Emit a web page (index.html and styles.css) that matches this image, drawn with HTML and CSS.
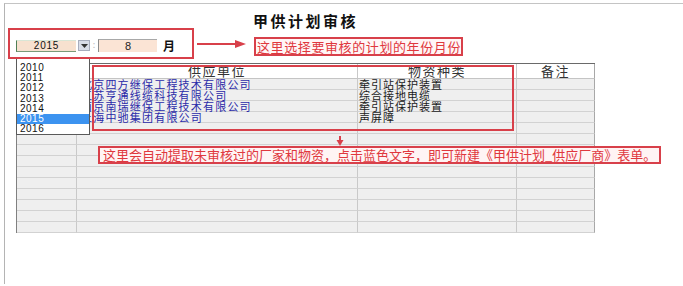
FILE: index.html
```html
<!DOCTYPE html>
<html lang="zh">
<head>
<meta charset="utf-8">
<title>甲供计划审核</title>
<link rel="stylesheet" href="styles.css">
</head>
<body>
<div class="page">
  <div class="frame">
    <div class="title">甲供计划审核</div>
    <div class="controls">
      <div class="combo">2015</div>
      <div class="combo-btn"><svg width="7" height="4" viewBox="0 0 7 4"><path d="M0 0H7L3.5 4Z" fill="#333"/></svg></div>
      <div class="sep">:</div>
      <div class="month">8</div>
      <div class="month-label">月</div>
    </div>
    <div class="grid">
      <div class="cell head"></div>
      <div class="cell head">供应单位</div>
      <div class="cell head">物资种类</div>
      <div class="cell head">备注</div>

      <div class="cell"></div><div class="cell link"><a href="#">北京四方继保工程技术有限公司</a></div><div class="cell txt">牵引站保护装置</div><div class="cell"></div>
      <div class="cell"></div><div class="cell link"><a href="#">江苏亨通线缆科技有限公司</a></div><div class="cell txt">综合接地电缆</div><div class="cell"></div>
      <div class="cell"></div><div class="cell link"><a href="#">南京南瑞继保工程技术有限公司</a></div><div class="cell txt">牵引站保护装置</div><div class="cell"></div>
      <div class="cell"></div><div class="cell link"><a href="#">上海中驰集团有限公司</a></div><div class="cell txt">声屏障</div><div class="cell"></div>
      <div class="cell"></div><div class="cell"></div><div class="cell"></div><div class="cell"></div>
      <div class="cell"></div><div class="cell"></div><div class="cell"></div><div class="cell"></div>
      <div class="cell"></div><div class="cell"></div><div class="cell"></div><div class="cell"></div>
      <div class="cell"></div><div class="cell"></div><div class="cell"></div><div class="cell"></div>
      <div class="cell"></div><div class="cell"></div><div class="cell"></div><div class="cell"></div>
      <div class="cell"></div><div class="cell"></div><div class="cell"></div><div class="cell"></div>
      <div class="cell"></div><div class="cell"></div><div class="cell"></div><div class="cell"></div>
      <div class="cell"></div><div class="cell"></div><div class="cell"></div><div class="cell"></div>
      <div class="cell"></div><div class="cell"></div><div class="cell"></div><div class="cell"></div>
      <div class="cell"></div><div class="cell"></div><div class="cell"></div><div class="cell"></div>
    </div>
  </div>

  <ul class="dropdown">
    <li>2010</li>
    <li>2011</li>
    <li>2012</li>
    <li>2013</li>
    <li>2014</li>
    <li class="selected">2015</li>
    <li>2016</li>
  </ul>

  <div class="note-box box-year"></div>
  <svg class="arrow-right" width="50" height="10" viewBox="0 0 50 10">
    <path d="M0 5H40" stroke="#d8404a" stroke-width="2"/>
    <path d="M38 1L49 5L38 9Z" fill="#d8404a"/>
  </svg>
  <div class="note-box box-hint1">这里选择要审核的计划的年份月份</div>
  <div class="note-box box-table"></div>
  <svg class="arrow-down" width="8" height="10" viewBox="0 0 8 10">
    <path d="M4 0V5" stroke="#d8404a" stroke-width="2"/>
    <path d="M0.5 4L4 10L7.5 4Z" fill="#d8404a"/>
  </svg>
  <div class="note-box box-hint2">这里会自动提取未审核过的厂家和物资，点击蓝色文字，即可新建《甲供计划_供应厂商》表单。</div>
</div>
</body>
</html>
```

FILE: styles.css
```css
* { box-sizing: border-box; }
html, body {
  margin: 0;
  padding: 0;
  background: #fff;
}
body {
  font-family: "Noto Sans CJK SC", "Liberation Sans", sans-serif;
  color: #222;
}
.page {
  position: relative;
  width: 683px;
  height: 286px;
  overflow: hidden;
}
.frame {
  margin-left: 4px;
  margin-top: 3px;
  height: 281px;
  border-left: 1px solid #b4b4b4;
  border-top: 1px solid #c4c4c4;
}
.title {
  margin-top: 7px;
  padding-left: 248px;
  height: 20px;
  font-size: 15px;
  line-height: 20px;
  font-weight: bold;
  letter-spacing: 2.5px;
  color: #111;
}
.controls {
  display: flex;
  align-items: flex-start;
  margin-top: 8px;
  padding-left: 11px;
  height: 13px;
}
.combo {
  width: 60px;
  height: 12px;
  margin-top: 1px;
  background: #f7e1cf;
  border-left: 1px solid #4f7f55;
  border-top: 1px solid #d9e6d6;
  border-bottom: 1px solid #7a9a78;
  font-family: "Liberation Sans", sans-serif;
  font-size: 10px;
  line-height: 10px;
  letter-spacing: 0.8px;
  text-align: center;
  color: #111;
}
.combo-btn {
  width: 12px;
  height: 11px;
  margin-top: 1px;
  margin-left: 2px;
  background: #d9dde8;
  border: 1px solid #a7adbd;
  display: flex;
  align-items: center;
  justify-content: center;
}
.sep {
  width: 8px;
  font-size: 9px;
  line-height: 12px;
  color: #bbb;
  text-align: center;
}
.month {
  width: 59px;
  height: 13px;
  background: #fbe4d5;
  border-left: 1px solid #8a8a8a;
  border-top: 1px solid #a8a8a8;
  font-family: "Liberation Sans", sans-serif;
  font-size: 11px;
  line-height: 12px;
  text-align: center;
  color: #222;
}
.month-label {
  margin-left: 6px;
  font-size: 12px;
  line-height: 13px;
  font-weight: bold;
  color: #111;
}
.grid {
  display: grid;
  grid-template-columns: 60px 281px 159px 78px;
  grid-template-rows: 15px;
  grid-auto-rows: 11px;
  margin-top: 11px;
  margin-left: 11px;
  width: 579px;
  border-left: 1px solid #808080;
  border-top: 1px solid #6a6a6a;
}
.cell {
  background: #efefef;
  border-right: 1px solid #c9c9c9;
  border-bottom: 1px solid #d2d2d2;
  font-size: 11px;
  line-height: 10px;
  white-space: nowrap;
}
.cell:nth-child(4n) { border-right-color: #a8a8a8; }
.cell.head {
  background: #fff;
  border-bottom-color: #c4c4c4;
  text-align: center;
  font-size: 13px;
  line-height: 14px;
  letter-spacing: 1.5px;
  color: #333;
}
.cell.link { padding-left: 4px; }
.cell.link a {
  color: #2a2aa8;
  text-decoration: underline;
  font-size: 11px;
  letter-spacing: 1.2px;
  line-height: 10px;
}
.cell.txt {
  padding-left: 1px;
  font-size: 11px;
  letter-spacing: 1px;
  color: #1a1a1a;
}
.dropdown {
  position: absolute;
  left: 16px;
  top: 58px;
  width: 74px;
  height: 77px;
  margin: 0;
  padding: 4px 0 0 0;
  list-style: none;
  background: #fff;
  border: 1px solid #5a5a5a;
  border-top-color: #9a9a9a;
  font-family: "Liberation Sans", sans-serif;
  font-size: 10px;
  letter-spacing: 0.5px;
  color: #111;
}
.dropdown li {
  height: 10.2px;
  line-height: 10.2px;
  padding-left: 3px;
}
.dropdown li.selected {
  background: #3c93f0;
  color: #fff;
}
.note-box {
  position: absolute;
  border: 2px solid #d8404a;
}
.box-year { left: 8px; top: 28px; width: 186px; height: 31px; }
.box-hint1 {
  left: 254px; top: 37px; width: 209px; height: 19px;
  background: #fff6f6;
  color: #e0383e;
  font-size: 13px;
  line-height: 15px;
  letter-spacing: 0.6px;
  padding-left: 1px;
  white-space: nowrap;
}
.box-table { left: 92px; top: 65px; width: 422px; height: 66px; }
.box-hint2 {
  left: 98px; top: 146px; width: 563px; height: 18px;
  background: #fff4f4;
  color: #e0383e;
  font-size: 13px;
  line-height: 13px;
  padding-left: 3px;
  white-space: nowrap;
}
.arrow-right { position: absolute; left: 197px; top: 39px; }
.arrow-down { position: absolute; left: 336px; top: 136px; }
```
